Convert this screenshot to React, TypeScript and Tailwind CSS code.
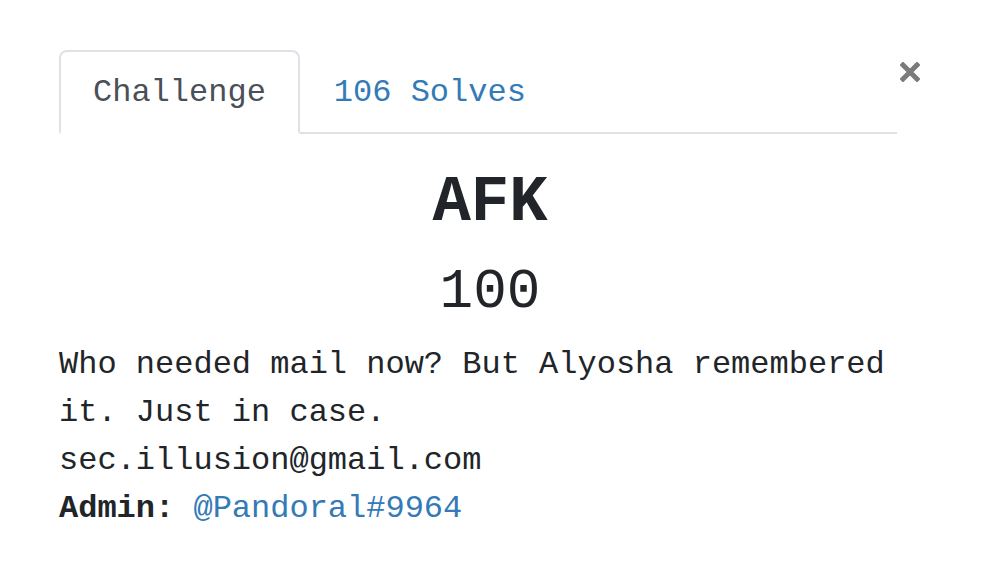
export default function App() {
  return (
    <div className="min-h-[570px] w-[984px] bg-white font-['Liberation_Mono',monospace] text-[#212529]">
      <div className="ml-[59px] w-[862px] pt-[50px]">
        {/* Tabs + close */}
        <div className="flex items-start">
          <ul className="flex w-[838px] border-b-2 border-[#dee2e6]">
            <li className="-mb-[2px]">
              <a className="block rounded-t-[8px] border-2 border-[#dee2e6] border-b-white bg-white px-[32px] pb-[15px] pt-[17px] text-[32px] leading-[48px] text-[#495057]">
                Challenge
              </a>
            </li>
            <li className="-mb-[2px]">
              <a className="block border-2 border-transparent px-[32px] pb-[15px] pt-[17px] text-[32px] leading-[48px] text-[#337ab7]">
                106 Solves
              </a>
            </li>
          </ul>
          <button className="ml-[3px] mt-[12px] flex h-[20px] w-[20px] items-center justify-center">
            <svg viewBox="0 0 20 20" className="h-[20px] w-[20px]">
              <path d="M3 3 L17 17 M17 3 L3 17" stroke="#7b7b7b" strokeWidth="5" strokeLinecap="square" />
            </svg>
          </button>
        </div>

        {/* Content */}
        <div className="pt-[31px]">
          <h2 className="mb-[17px] text-center text-[64px] font-bold leading-[1.2]">AFK</h2>
          <h3 className="mb-[15px] text-center text-[56px] leading-[1.2]">100</h3>
          <p className="text-[32px] leading-[48px]">
            Who needed mail now? But Alyosha remembered it. Just in case.
          </p>
          <p className="text-[32px] leading-[48px]">sec.illusion@gmail.com</p>
          <p className="text-[32px] leading-[48px]">
            <span className="font-bold">Admin:</span> <a className="text-[#337ab7]">@Pandoral#9964</a>
          </p>
        </div>
      </div>
    </div>
  )
}
